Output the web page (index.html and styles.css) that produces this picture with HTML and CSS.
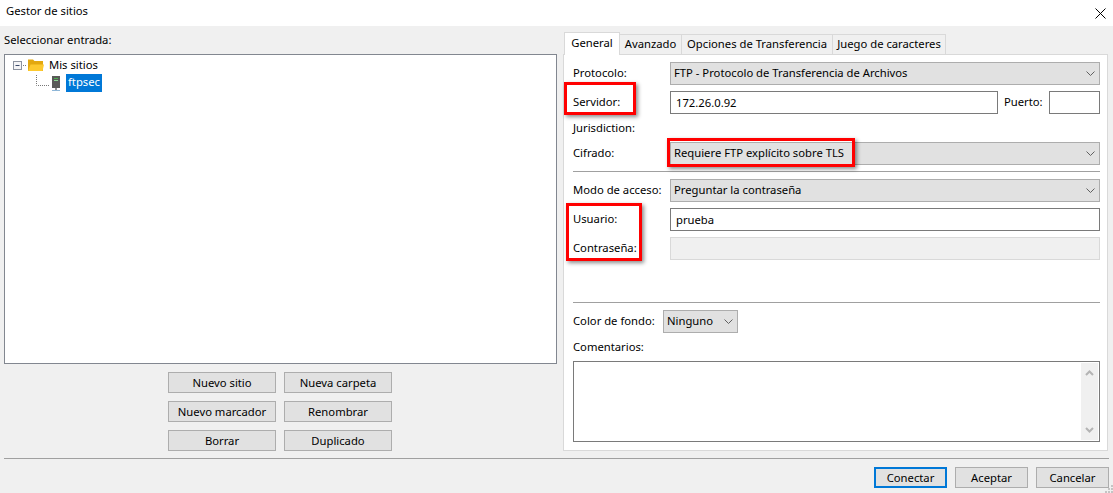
FILE: index.html
```html
<!DOCTYPE html>
<html lang="es">
<head>
<meta charset="utf-8">
<title>Gestor de sitios</title>
<link rel="stylesheet" href="styles.css">
</head>
<body>
<div class="window">
  <header class="titlebar">
    <span>Gestor de sitios</span>
    <svg class="close" width="11" height="11" viewBox="0 0 11 11"><path d="M.5.5l10 10M10.500.5l-10 10" stroke="#000" fill="none"/></svg>
  </header>
  <main class="main">
    <section class="left">
      <div class="left-label">Seleccionar entrada:</div>
      <div class="tree">
        <div class="tree-row root">
          <svg class="tree-root-icon" width="32" height="16" viewBox="0 0 32 16">
            <rect x=".5" y="3.500" width="8" height="8" fill="#f4f4f6" stroke="#8c93a0"/>
            <path d="M2.500 7.500h4" stroke="#3a4a6a"/>
            <path d="M10 7.500h4" stroke="#777" stroke-dasharray="1 1"/>
            <path d="M15 1.500h5l1.500 1.500H30v10H15z" fill="#e3a80f"/>
            <path d="M15 13l2.500-6.500H31L29.500 13z" fill="#fdc92e"/>
          </svg>
          <span class="tree-name">Mis sitios</span>
        </div>
        <div class="tree-row child">
          <svg class="tree-child-icon" width="26" height="17" viewBox="0 0 26 17">
            <path d="M.5 0v10.500H13" stroke="#777" fill="none" stroke-dasharray="1 1"/>
            <rect x="16" y="1" width="8" height="12" fill="#5a5a58"/>
            <rect x="18" y="3" width="4" height="1" fill="#4caf50"/>
            <rect x="18" y="5" width="4" height="1" fill="#8fd694"/>
            <rect x="19" y="13" width="2" height="2" fill="#8d8d8d"/>
            <rect x="16" y="15" width="8" height="1" fill="#8fb7d8"/>
          </svg>
          <span class="tree-selected">ftpsec</span>
        </div>
      </div>
      <div class="site-buttons">
        <button class="btn">Nuevo sitio</button>
        <button class="btn">Nueva carpeta</button>
        <button class="btn">Nuevo marcador</button>
        <button class="btn">Renombrar</button>
        <button class="btn">Borrar</button>
        <button class="btn">Duplicado</button>
      </div>
    </section>
    <section class="right">
      <nav class="tabs">
        <div class="tab active">General</div>
        <div class="tab w-avanzado">Avanzado</div>
        <div class="tab w-opciones">Opciones de Transferencia</div>
        <div class="tab w-juego">Juego de caracteres</div>
      </nav>
      <div class="panel">
        <div class="form">
          <label>Protocolo:</label>
          <div class="select">FTP - Protocolo de Transferencia de Archivos<svg class="chev" width="9" height="5" viewBox="0 0 9 5"><path d="M.5.500l4 4 4-4" fill="none" stroke="#606060"/></svg></div>
          <label>Servidor:</label>
          <div class="host-row">
            <input class="input host" value="172.26.0.92">
            <label class="port-label">Puerto:</label>
            <input class="input port">
          </div>
          <label class="text-row">Jurisdiction:</label>
          <div class="text-row"></div>
          <label>Cifrado:</label>
          <div class="select">Requiere FTP explícito sobre TLS<svg class="chev" width="9" height="5" viewBox="0 0 9 5"><path d="M.5.500l4 4 4-4" fill="none" stroke="#606060"/></svg></div>
        </div>
        <hr class="rule first">
        <div class="form">
          <label>Modo de acceso:</label>
          <div class="select">Preguntar la contraseña<svg class="chev" width="9" height="5" viewBox="0 0 9 5"><path d="M.5.500l4 4 4-4" fill="none" stroke="#606060"/></svg></div>
          <label>Usuario:</label>
          <input class="input" value="prueba">
          <label>Contraseña:</label>
          <input class="input disabled" disabled>
        </div>
        <hr class="rule second">
        <div class="color-row">
          <label>Color de fondo:</label>
          <div class="select small">Ninguno<svg class="chev" width="9" height="5" viewBox="0 0 9 5"><path d="M.5.500l4 4 4-4" fill="none" stroke="#606060"/></svg></div>
        </div>
        <div class="comments-label">Comentarios:</div>
        <div class="comments">
          <div class="scrollbar">
            <svg width="9" height="6" viewBox="0 0 9 6"><path d="M1 5l3.500-3.500L8 5" fill="none" stroke="#b4b4b4" stroke-width="2"/></svg>
            <svg width="9" height="6" viewBox="0 0 9 6"><path d="M1 1l3.500 3.500L8 1" fill="none" stroke="#b4b4b4" stroke-width="2"/></svg>
          </div>
        </div>
        <div class="mark mark-server"></div>
        <div class="mark mark-cipher"></div>
        <div class="mark mark-user"></div>
      </div>
    </section>
  </main>
  <hr class="bottom-rule">
  <footer class="footer">
    <button class="btn foot default">Conectar</button>
    <button class="btn foot">Aceptar</button>
    <button class="btn foot">Cancelar</button>
  </footer>
  <svg class="grip" width="8" height="8" viewBox="0 0 8 8"><path d="M6 0h2v2H6zM3 3h2v2H3zM6 3h2v2H6zM0 6h2v2H0zM3 6h2v2H3zM6 6h2v2H6z" fill="#c4c4c4"/></svg>
</div>
</body>
</html>
```
FILE: styles.css
```css
* { box-sizing: border-box; }
html, body { margin: 0; padding: 0; height: 100%; overflow: hidden; }
body { font: 11.25px/16px "Noto Sans", "Open Sans", sans-serif; color: #000; background: #f0f0f0; }
.window { position: relative; width: 1113px; height: 493px; }

.titlebar { height: 26px; background: #fff; display: flex; justify-content: space-between; align-items: center; padding: 0 7px 5px 6px; }
.close { display: block; margin-top: 5px; }

.main { display: flex; height: 425px; padding: 6px 5px 0 4px; }
.left { width: 553px; display: flex; flex-direction: column; }
.left-label { height: 22px; line-height: 15px; }
.tree { height: 311px; background: #fff; border: 1px solid #828790; padding: 2px 0 0 8px; }
.tree-row { display: flex; align-items: center; height: 17px; }
.tree-root-icon { display: block; margin-top: 1px; }
.tree-name { margin-left: 4px; }
.child { margin-left: 23px; height: 17px; margin-top: 1px; }
.tree-child-icon { display: block; }
.tree-selected { background: #0078d7; color: #fff; padding: 0 2px 1px; height: 18px; margin-left: 4px; }

.site-buttons { display: grid; grid-template-columns: 108px 108px; grid-auto-rows: 21px; gap: 8px; justify-content: center; margin: 8px 1px 0 0; }
.btn { font: inherit; background: #e1e1e1; border: 1px solid #adadad; color: #000; padding: 0; }

.right { width: 545px; margin-left: 6px; display: flex; flex-direction: column; }
.tabs { display: flex; height: 22px; align-items: flex-end; }
.tab { height: 20px; background: #f0f0f0; border: 1px solid #d9d9d9; border-bottom: 0; border-left: 0; text-align: center; line-height: 18px; }
.tab.active { width: 56px; margin-left: 1px; background: #fff; border-left: 1px solid #d9d9d9; position: relative; z-index: 1; margin-bottom: -1px; height: 23px; line-height: 20px; }
.w-avanzado { width: 62px; }
.w-opciones { width: 151px; }
.w-juego { width: 113px; }

.panel { position: relative; height: 397px; background: #fff; border: 1px solid #d9d9d9; padding: 7px 7px 0 9px; }
.form { display: grid; grid-template-columns: 97px 1fr; row-gap: 6px; align-items: center; }
.form label, .color-row label { line-height: 16px; display: block; padding-bottom: 2px; }
.form .text-row { height: 16px; padding-bottom: 0; }
.select { position: relative; height: 23px; background: #e1e1e1; border: 1px solid #adadad; padding-left: 3px; line-height: 20px; }
.chev { position: absolute; right: 4px; top: 8px; }
.input { font: inherit; height: 23px; width: 100%; border: 1px solid #7a7a7a; background: #fff; padding: 0 5px; margin: 0; color: #000; outline: none; }
.input.disabled { background: #f0f0f0; border-color: #d9d9d9; }
.host-row { display: flex; align-items: center; }
.input.host { width: 328px; }
.port-label { margin-left: 6px; width: 45px; }
.input.port { width: 51px; }

.rule { border: 0; height: 1px; background: #a0a0a0; margin: 0; }
.rule.first { margin: 6px 0 7px; }
.rule.second { margin: 42px 0 7px; }
.color-row { display: flex; align-items: center; height: 23px; }
.color-row label { width: 90px; }
.select.small { width: 75px; }
.comments-label { height: 28px; padding-top: 6px; line-height: 16px; }
.comments { height: 81px; border: 1px solid #7a7a7a; background: #fff; display: flex; justify-content: flex-end; padding: 1px; }
.scrollbar { width: 17px; background: #f0f0f0; display: flex; flex-direction: column; justify-content: space-between; align-items: center; padding: 7px 0; }
.scrollbar svg { display: block; }

.mark { position: absolute; border: 3px solid #f00; box-shadow: 2px 2px 4px rgba(0, 0, 0, .45); }
.mark-server { left: 0; top: 27px; width: 72px; height: 33px; }
.mark-cipher { left: 103px; top: 83px; width: 188px; height: 29px; }
.mark-user { left: 2px; top: 148px; width: 76px; height: 58px; }

.bottom-rule { border: 0; height: 1px; background: #a0a0a0; margin: 7px 4px 0; }
.footer { display: flex; justify-content: flex-end; gap: 8px; padding: 8px 4px 0 0; }
.foot { width: 73px; height: 21px; }
.default { border: 2px solid #0078d7; }
.grip { position: absolute; right: 0; bottom: 0; }
```
